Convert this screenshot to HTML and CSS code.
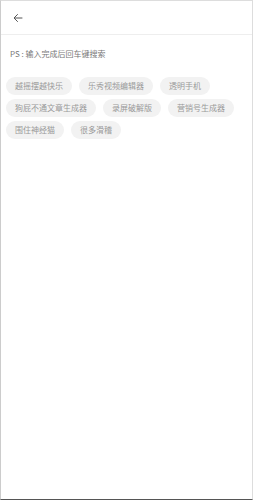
FILE: index.html
```html
<!DOCTYPE html>
<html lang="zh">
  <head>
    <meta charset="UTF-8" />
    <meta name="viewport" content="width=device-width, initial-scale=1.0" />
    <title>搜索</title>
    <link rel="stylesheet" href="styles.css">
  </head>
  <body>
    <div class="frame">
      <header class="topbar">
        <svg class="back" width="12" height="12" viewBox="0 0 24 24">
          <path d="M20 12H5M11 5l-7 7 7 7" fill="none" stroke="#555" stroke-width="2" stroke-linecap="round" stroke-linejoin="round"/>
        </svg>
      </header>

      <p class="hint">PS : 输入完成后回车键搜索</p>

      <div class="tags">
        <span class="tag">越摇摆越快乐</span>
        <span class="tag">乐秀视频编辑器</span>
        <span class="tag">透明手机</span>
        <span class="tag">狗屁不通文章生成器</span>
        <span class="tag">录屏破解版</span>
        <span class="tag">营销号生成器</span>
        <span class="tag">围住神经猫</span>
        <span class="tag">很多滑稽</span>
      </div>
    </div>
  </body>
</html>
```

FILE: styles.css
```css
body {
  margin: 0;
  font-family: "Noto Sans CJK SC", "Liberation Sans", sans-serif;
  background: #fff;
}

.frame {
  height: 500px;
  box-sizing: border-box;
  border-top: 1px solid #ddd;
  border-left: 1px solid #ccc;
  border-right: 1px solid #ddd;
  border-bottom: 1px solid #555;
}

.topbar {
  height: 33px;
  display: flex;
  align-items: center;
  padding-left: 11px;
  border-bottom: 1px solid #eee;
}

.hint {
  margin: 0;
  padding: 14px 9px 0;
  font-size: 8px;
  line-height: 10px;
  color: #777;
}

.tags {
  display: flex;
  flex-wrap: wrap;
  gap: 4px 7px;
  padding: 18px 5px 0;
}

.tag {
  height: 18px;
  line-height: 18px;
  padding: 0 9px;
  border-radius: 9px;
  background: #f2f2f2;
  color: #999;
  font-size: 8px;
}
```
